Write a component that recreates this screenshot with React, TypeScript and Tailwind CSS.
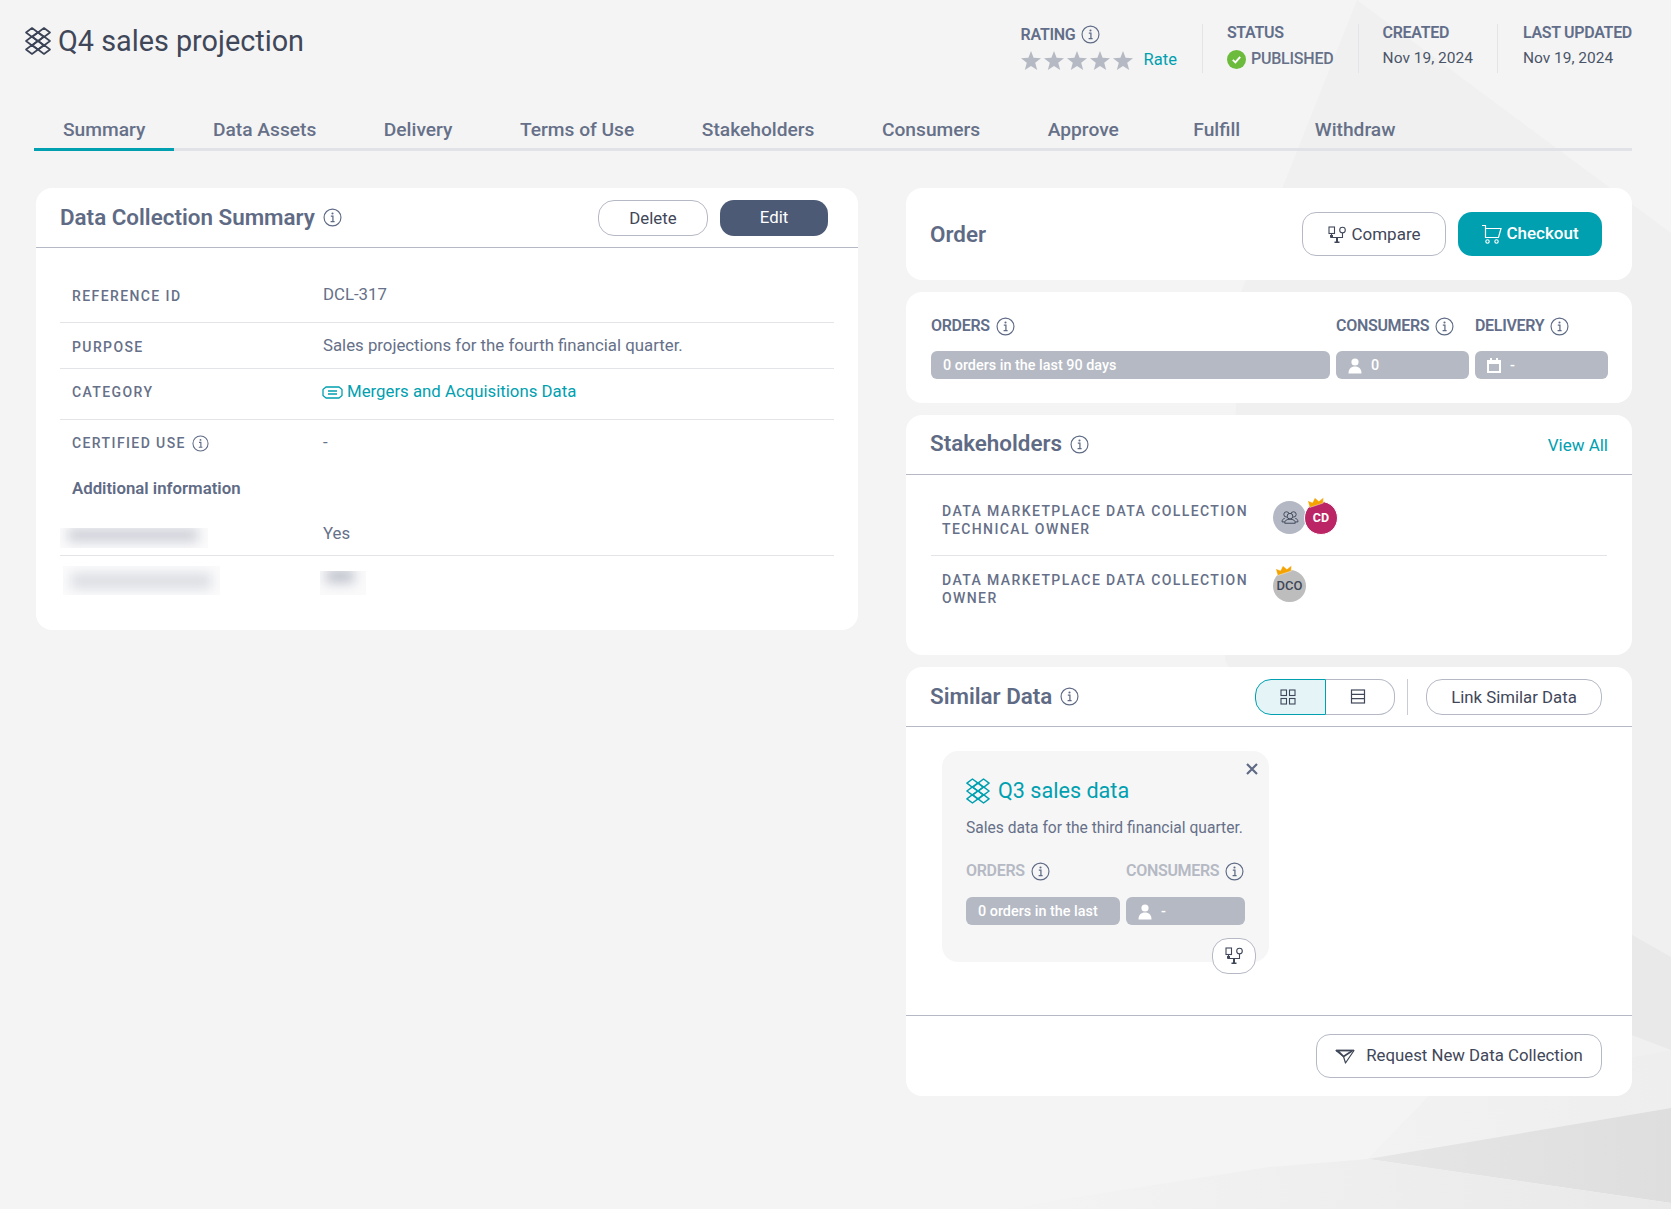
import React from "react";

function Info({ size = 18, cls = "text-[#5f6b85]" }: { size?: number; cls?: string }) {
  return (
    <svg width={size} height={size} viewBox="0 0 18 18" fill="none" className={"shrink-0 " + cls}>
      <circle cx="9" cy="9" r="8" stroke="currentColor" strokeWidth="1.1" />
      <circle cx="9" cy="5.2" r="1" fill="currentColor" />
      <path d="M7.4 7.8H9.4V12.8M7.2 13H11" stroke="currentColor" strokeWidth="1.2" />
    </svg>
  );
}

function Logo({ w, h, cls }: { w: number; h: number; cls: string }) {
  const ds: [number, number][] = [
    [7, 5.5], [19, 5.5], [7, 14], [19, 14], [7, 22.5], [19, 22.5], [13, 9.75], [13, 18.25],
  ];
  return (
    <svg width={w} height={h} viewBox="0 0 26 28" fill="none" className={"shrink-0 " + cls}>
      {ds.map(([x, y], i) => (
        <path
          key={i}
          d={`M${x} ${y - 4.5}L${x + 6} ${y}L${x} ${y + 4.5}L${x - 6} ${y}Z`}
          stroke="currentColor"
          strokeWidth="1.6"
          strokeLinejoin="round"
        />
      ))}
    </svg>
  );
}

function CompareIcon() {
  return (
    <svg width="20" height="20" viewBox="0 0 20 20" fill="none" className="shrink-0 text-[#3f4759]">
      <rect x="2" y="2" width="5.5" height="6.5" stroke="currentColor" strokeWidth="1.1" />
      <circle cx="15.5" cy="5" r="2.8" stroke="currentColor" strokeWidth="1.1" />
      <path d="M4.5 8.5V12.5H15.5V8" stroke="currentColor" strokeWidth="1.1" />
      <path d="M3 10H6V12.8H3Z M9 12.5H11V16.5H12.5V18H7.5V16.5H9Z" fill="currentColor" />
    </svg>
  );
}

function UserIcon() {
  return (
    <svg width="14" height="16" viewBox="0 0 14 16" className="shrink-0 text-white">
      <circle cx="7" cy="4" r="3.6" fill="currentColor" />
      <path d="M0.5 15.5C0.5 11 3 8.6 7 8.6S13.5 11 13.5 15.5Z" fill="currentColor" />
    </svg>
  );
}

function Crown({ cls }: { cls: string }) {
  return (
    <svg width="17" height="10" viewBox="0 0 17 10" className={"absolute " + cls}>
      <path d="M1 9.5L0 2.5L4.5 5L7.5 0.5L11 4.5L16 1.5L15 7Z" fill="#f5a300" stroke="#fff" strokeWidth="0.4" />
    </svg>
  );
}

function Pill({ children, cls }: { children: React.ReactNode; cls: string }) {
  return (
    <div className={"flex h-[28px] items-center rounded-[6px] bg-[#b5b9c3] pl-3 pt-[1px] text-[14.4px] font-medium text-white " + cls}>
      {children}
    </div>
  );
}

function MetaLabel({ children, cls = "text-[#626e89]" }: { children: React.ReactNode; cls?: string }) {
  return <span className={"text-[16px] font-semibold leading-[18px] tracking-[-0.3px] " + cls}>{children}</span>;
}

function CardHead({ title, children, h, tcls = "pb-[2px]" }: { title: string; children?: React.ReactNode; h: string; tcls?: string }) {
  return (
    <div className={"flex items-center justify-between border-b border-[#b5b9c5] pl-[24px] " + h}>
      <div className="flex items-center gap-[8px]">
        <h2 className={"text-[22.4px] font-semibold leading-[28px] text-[#5f6b85] " + tcls}>{title}</h2>
        <Info size={19} />
      </div>
      {children}
    </div>
  );
}

function DetailLabel({ children }: { children: React.ReactNode }) {
  return <span className="text-[14px] font-medium tracking-[1.4px] text-[#667088]">{children}</span>;
}

const tabs = ["Summary", "Data Assets", "Delivery", "Terms of Use", "Stakeholders", "Consumers", "Approve", "Fulfill", "Withdraw"];

export default function App() {
  return (
    <div className="relative min-h-[1209px] w-full overflow-hidden bg-[#f4f4f4] [font-family:Roboto,sans-serif]">
      <svg className="pointer-events-none absolute inset-0" width="1671" height="1209" viewBox="0 0 1671 1209" fill="none">
        <defs>
          <linearGradient id="bot" x1="1000" y1="1170" x2="1671" y2="1209" gradientUnits="userSpaceOnUse">
            <stop offset="0" stopColor="#f4f4f4" />
            <stop offset="1" stopColor="#e9e9e9" />
          </linearGradient>
          <linearGradient id="dark" x1="1368" y1="1159" x2="1671" y2="1150" gradientUnits="userSpaceOnUse">
            <stop offset="0" stopColor="#e6e6e6" />
            <stop offset="1" stopColor="#dedede" />
          </linearGradient>
          <linearGradient id="mid" x1="1300" y1="1150" x2="1671" y2="1080" gradientUnits="userSpaceOnUse">
            <stop offset="0" stopColor="#f3f3f3" />
            <stop offset="1" stopColor="#eeeeee" />
          </linearGradient>
        </defs>
        <polygon points="1357,0 1671,233 1671,1108 1368,1159 1429,1096 1225,660 1241,292" fill="#f0f0f0" />
        <polygon points="1429,1096 1671,1050 1671,1108 1368,1159" fill="url(#mid)" />
        <polygon points="1500,860 1671,957 1671,1050 1500,985" fill="#e9e9e9" />
        <polygon points="1368,1159 1671,1108 1671,1203" fill="url(#dark)" />
        <polygon points="1000,1209 1671,1209 1671,1203 1368,1159 1269,1167" fill="url(#bot)" />
      </svg>

      <div className="relative">
        {/* Top header */}
        <div className="flex items-start justify-between pl-[25px] pr-[39px] pt-[24px]">
          <div className="flex items-center gap-[7px] pt-[3px]">
            <Logo w={26} h={28} cls="text-[#3b4356]" />
            <h1 className="text-[28.8px] font-normal leading-[28px] text-[#3f4759]">Q4 sales projection</h1>
          </div>
          <div className="flex h-[49px]">
            <div className="flex flex-col pr-[25px]">
              <div className="flex items-center gap-[6px] pt-[1px]">
                <MetaLabel>RATING</MetaLabel>
                <Info size={19} />
              </div>
              <div className="mt-[6px] flex items-center gap-[11px]">
                <div className="flex gap-[3px]">
                  {[0, 1, 2, 3, 4].map((i) => (
                    <svg key={i} width="20" height="19" viewBox="0 0 20 19">
                      <path d="M10 0L12.6 6.7L20 7.2L14.2 11.8L16.2 19L10 15L3.8 19L5.8 11.8L0 7.2L7.4 6.7Z" fill="#b5b9c3" />
                    </svg>
                  ))}
                </div>
                <span className="text-[16.5px] leading-[20px] text-[#00a0b0]">Rate</span>
              </div>
            </div>
            <div className="flex flex-col border-l border-[#e3e4e8] px-[24px]">
              <MetaLabel>STATUS</MetaLabel>
              <div className="mt-[5px] flex items-center gap-[5px]">
                <svg width="19" height="19" viewBox="0 0 19 19">
                  <circle cx="9.5" cy="9.5" r="9.5" fill="#6cbb3c" />
                  <path d="M5.8 9.8L8.4 12.4L13.2 6.8" stroke="#fff" strokeWidth="1.9" fill="none" />
                </svg>
                <span className="text-[16px] font-medium tracking-[-0.2px] text-[#667088]">PUBLISHED</span>
              </div>
            </div>
            <div className="flex flex-col border-l border-[#e3e4e8] px-[24px]">
              <MetaLabel>CREATED</MetaLabel>
              <span className="mt-[4px] text-[15.5px] leading-[24px] text-[#4b5568]">Nov 19, 2024</span>
            </div>
            <div className="flex flex-col border-l border-[#e3e4e8] pl-[25px]">
              <MetaLabel>LAST UPDATED</MetaLabel>
              <span className="mt-[4px] text-[15.5px] leading-[24px] text-[#4b5568]">Nov 19, 2024</span>
            </div>
          </div>
        </div>

        {/* Tabs */}
        <div className="ml-[34px] mr-[39px] mt-[37px] flex h-[41px] gap-[9.5px] border-b-[3px] border-[#e1e2e7]">
          {tabs.map((t, i) => (
            <div
              key={t}
              className={
                "-mb-[3px] flex h-[41px] items-center border-b-[3px] px-[29px] pt-[2px] text-[19.2px] font-medium text-[#667088] " +
                (i === 0 ? "border-[#00a0b0]" : "border-transparent") +
                (t === "Fulfill" ? " ml-[7px]" : "") +
                (t === "Withdraw" ? " ml-[7px]" : "")
              }
            >
              {t}
            </div>
          ))}
        </div>

        {/* Main */}
        <div className="ml-[36px] mr-[39px] mt-[37px] flex items-start gap-[48px]">
          {/* Left card */}
          <div className="h-[442px] w-[822px] shrink-0 overflow-hidden rounded-[16px] bg-white">
            <CardHead title="Data Collection Summary" h="h-[60px] pr-[30px]">
              <div className="flex gap-[12px]">
                <button className="h-[36px] w-[110px] rounded-[16px] border border-[#b5b9c5] bg-white pt-[2px] text-[16.8px] text-[#3f4759]">Delete</button>
                <button className="h-[36px] w-[108px] rounded-[14px] bg-[#4d5a76] text-[16.8px] text-white">Edit</button>
              </div>
            </CardHead>
            <div className="px-[24px] text-[16.8px] text-[#667088]">
              <div className="flex h-[75px] items-center border-b border-[#e3e4e8] pl-[12px] pt-[20px]">
                <div className="w-[251px] pt-[1px]"><DetailLabel>REFERENCE ID</DetailLabel></div>
                <span>DCL-317</span>
              </div>
              <div className="flex h-[46px] items-center border-b border-[#e3e4e8] pl-[12px]">
                <div className="w-[251px] pt-[2px]"><DetailLabel>PURPOSE</DetailLabel></div>
                <span>Sales projections for the fourth financial quarter.</span>
              </div>
              <div className="flex h-[51px] items-center border-b border-[#e3e4e8] pb-[4px] pl-[12px]">
                <div className="w-[250px]"><DetailLabel>CATEGORY</DetailLabel></div>
                <svg width="21" height="13" viewBox="0 0 21 13" fill="none" className="mr-[4px] text-[#00a0b0]">
                  <path d="M4 1H17L20 3.5V9.5L17 12H4L1 9.5V3.5Z" stroke="currentColor" strokeWidth="1.3" strokeLinejoin="round" />
                  <path d="M6 5H15M6 8H15" stroke="currentColor" strokeWidth="1.3" />
                </svg>
                <span className="text-[#00a0b0]">Mergers and Acquisitions Data</span>
              </div>
              <div className="flex h-[46px] items-center pl-[12px]">
                <div className="flex w-[251px] items-center gap-[6px]">
                  <DetailLabel>CERTIFIED USE</DetailLabel>
                  <Info size={17} />
                </div>
                <span>-</span>
              </div>
              <div className="flex h-[46px] items-center pl-[12px]">
                <span className="font-semibold text-[#5f6b85]">Additional information</span>
              </div>
              <div className="flex h-[44px] border-b border-[#e3e4e8] pt-[16px]">
                <div className="h-[20px] w-[148px] overflow-hidden bg-[#fbfbfc]">
                  <div className="ml-[8px] mt-[0px] h-[14px] w-[130px] bg-[#cfd1d8] blur-[6px]"></div>
                </div>
                <span className="-mt-[7px] ml-[115px] h-[24px] leading-[24px]">Yes</span>
              </div>
              <div className="flex pt-[10px]">
                <div className="ml-[3px] h-[29px] w-[157px] overflow-hidden bg-[#fbfbfc]">
                  <div className="ml-[8px] mt-[7px] h-[16px] w-[140px] bg-[#dcdee3] blur-[6px]"></div>
                </div>
                <div className="ml-[100px] mt-[5px] h-[24px] w-[46px] overflow-hidden bg-[#fafafb]">
                  <div className="ml-[6px] mt-[-2px] h-[14px] w-[28px] bg-[#c0c3cd] blur-[6px]"></div>
                </div>
              </div>
            </div>
          </div>

          {/* Right column */}
          <div className="flex w-[726px] shrink-0 flex-col gap-[12px]">
            {/* Order */}
            <div className="flex h-[92px] items-center justify-between rounded-[16px] bg-white pl-[24px] pr-[30px]">
              <h2 className="pt-[2px] text-[22.4px] font-semibold text-[#5f6b85]">Order</h2>
              <div className="flex gap-[12px]">
                <button className="flex h-[44px] w-[144px] items-center justify-center gap-[4px] rounded-[14px] border border-[#b5b9c5] bg-white pt-[1px] text-[17px] text-[#3f4759]">
                  <CompareIcon />
                  Compare
                </button>
                <button className="flex h-[44px] w-[144px] items-center justify-center gap-[3px] rounded-[14px] bg-[#00a0b0] text-[17px] font-medium text-white">
                  <svg width="22" height="20" viewBox="0 0 22 20" fill="none">
                    <path d="M1 1.5H4.5V13.5H17.5L20 4.5H4.5" stroke="currentColor" strokeWidth="1.2" />
                    <circle cx="6.5" cy="17.5" r="1.7" stroke="currentColor" strokeWidth="1.1" />
                    <circle cx="15.5" cy="17.5" r="1.7" stroke="currentColor" strokeWidth="1.1" />
                  </svg>
                  Checkout
                </button>
              </div>
            </div>

            {/* Orders stats */}
            <div className="h-[111px] rounded-[16px] bg-white pl-[25px] pr-[24px] pt-[24px]">
              <div className="flex gap-[6px]">
                <div className="w-[399px]">
                  <div className="flex h-[20px] items-center gap-[6px]">
                    <MetaLabel>ORDERS</MetaLabel>
                    <Info size={19} />
                  </div>
                  <Pill cls="mt-[15px]">0 orders in the last 90 days</Pill>
                </div>
                <div className="w-[133px]">
                  <div className="flex h-[20px] items-center gap-[6px]">
                    <MetaLabel>CONSUMERS</MetaLabel>
                    <Info size={19} />
                  </div>
                  <Pill cls="mt-[15px] gap-[9px]"><UserIcon />0</Pill>
                </div>
                <div className="w-[133px]">
                  <div className="flex h-[20px] items-center gap-[6px]">
                    <MetaLabel>DELIVERY</MetaLabel>
                    <Info size={19} />
                  </div>
                  <Pill cls="mt-[15px] gap-[9px]">
                    <svg width="14" height="15" viewBox="0 0 14 15">
                      <path d="M0 2H3V0H5V2H9V0H11V2H14V15H0ZM2 6V13H12V6Z" fill="#fff" fillRule="evenodd" />
                    </svg>
                    -
                  </Pill>
                </div>
              </div>
            </div>

            {/* Stakeholders */}
            <div className="h-[240px] rounded-[16px] bg-white">
              <CardHead title="Stakeholders" h="h-[60px] pr-[24px]" tcls="pb-[4px]">
                <span className="pt-[3px] text-[17px] text-[#00a0b0]">View All</span>
              </CardHead>
              <div className="px-[25px]">
                <div className="flex h-[81px] items-start border-b border-[#e3e4e8] pl-[11px] pt-[27px]">
                  <div className="w-[331px] text-[14px] font-medium leading-[18px] tracking-[1.4px] text-[#667088]">
                    DATA MARKETPLACE DATA COLLECTION TECHNICAL OWNER
                  </div>
                  <div className="relative -mt-[1px] flex">
                    <div className="flex h-[33px] w-[33px] items-center justify-center rounded-full bg-[#b3b8c4]">
                      <svg width="18" height="15" viewBox="0 0 20 17" fill="none" stroke="#3f4759" strokeWidth="1.1">
                        <circle cx="6" cy="5" r="3" />
                        <circle cx="14" cy="5" r="3" />
                        <circle cx="10" cy="7" r="3.2" fill="#b3b8c4" />
                        <path d="M4 15C4 11.5 6.5 10.5 10 10.5S16 11.5 16 15Z" fill="#b3b8c4" />
                        <path d="M4 9.5C2 10 1 11 1 13.5H4M16 9.5C18 10 19 11 19 13.5H16" />
                      </svg>
                    </div>
                    <div className="-ml-[2px] flex h-[34px] w-[34px] items-center justify-center rounded-full border-[1px] border-white bg-[#bc2565] text-[12.5px] font-bold text-white">CD</div>
                    <Crown cls="left-[35px] -top-[4px] rotate-[-8deg]" />
                  </div>
                </div>
                <div className="flex items-start pl-[11px] pt-[15px]">
                  <div className="w-[331px] text-[14px] font-medium leading-[18px] tracking-[1.4px] text-[#667088]">
                    DATA MARKETPLACE DATA COLLECTION OWNER
                  </div>
                  <div className="relative -mt-[1px]">
                    <div className="flex h-[32px] w-[33px] items-center justify-center rounded-full bg-[#bdbdbd] text-[13px] font-medium text-[#3f4759]">DCO</div>
                    <Crown cls="left-[3px] -top-[5px] rotate-[-8deg]" />
                  </div>
                </div>
              </div>
            </div>

            {/* Similar */}
            <div className="h-[429px] rounded-[16px] bg-white">
              <CardHead title="Similar Data" h="h-[60px] pr-[30px]">
                <div className="flex items-center">
                  <div className="flex h-[36px] w-[71px] items-center justify-center rounded-l-[16px] border border-[#00a0b0] bg-[#e4f4f7] pr-[6px]">
                    <svg width="16" height="16" viewBox="0 0 16 16" fill="none" stroke="#3f4759" strokeWidth="1.1">
                      <rect x="1" y="1" width="5.5" height="5.5" />
                      <rect x="9.5" y="1" width="5.5" height="5.5" />
                      <rect x="1" y="9.5" width="5.5" height="5.5" />
                      <rect x="9.5" y="9.5" width="5.5" height="5.5" />
                    </svg>
                  </div>
                  <div className="flex h-[36px] w-[69px] items-center justify-center rounded-r-[16px] border border-l-0 border-[#b5b9c5] bg-white pr-[4px]">
                    <svg width="16" height="15" viewBox="0 0 16 15" fill="none" stroke="#3f4759" strokeWidth="1.2">
                      <rect x="1.5" y="1" width="13" height="13" />
                      <path d="M1.5 5.3H14.5M1.5 9.7H14.5" />
                    </svg>
                  </div>
                  <div className="ml-[12px] mr-[18px] h-[36px] w-px bg-[#c9ccd4]"></div>
                  <button className="h-[36px] w-[176px] rounded-[16px] border border-[#b5b9c5] bg-white pt-[2px] text-[16.8px] text-[#3f4759]">Link Similar Data</button>
                </div>
              </CardHead>
              <div className="h-[289px] border-b border-[#b5b9c5] pl-[36px] pt-[24px]">
                <div className="relative h-[211px] w-[327px] rounded-[16px] bg-[#f6f6f7] pl-[24px] pt-[27px]">
                  <svg width="14" height="14" viewBox="0 0 14 14" className="absolute right-[10px] top-[11px] text-[#5f6b85]" fill="none">
                    <path d="M2 2L12 12M12 2L2 12" stroke="currentColor" strokeWidth="2.2" />
                  </svg>
                  <div className="flex items-center gap-[8px]">
                    <Logo w={24} h={26} cls="text-[#00a0b0]" />
                    <span className="text-[21.6px] leading-[26px] text-[#00a0b0]">Q3 sales data</span>
                  </div>
                  <p className="mt-[13px] text-[15.6px] leading-[22px] text-[#667088]">Sales data for the third financial quarter.</p>
                  <div className="mt-[22px] flex">
                    <div className="w-[160px]">
                      <div className="flex h-[20px] items-center gap-[6px]">
                        <MetaLabel cls="text-[#b5b9c3]">ORDERS</MetaLabel>
                        <Info size={19} />
                      </div>
                      <Pill cls="mt-[16px] w-[154px]">0 orders in the last</Pill>
                    </div>
                    <div className="w-[119px]">
                      <div className="flex h-[20px] items-center gap-[6px]">
                        <MetaLabel cls="text-[#b5b9c3]">CONSUMERS</MetaLabel>
                        <Info size={19} />
                      </div>
                      <Pill cls="mt-[16px] gap-[9px]"><UserIcon />-</Pill>
                    </div>
                  </div>
                  <button className="absolute left-[270px] top-[187px] flex h-[36px] w-[44px] items-center justify-center rounded-[16px] border border-[#b5b9c5] bg-white">
                    <CompareIcon />
                  </button>
                </div>
              </div>
              <div className="flex justify-end pr-[30px] pt-[18px]">
                <button className="flex h-[44px] w-[286px] items-center justify-center gap-[11px] rounded-[14px] border border-[#b5b9c5] bg-white text-[16.8px] text-[#3f4759]">
                  <svg width="20" height="15" viewBox="0 0 20 15" fill="none" stroke="#3f4759" strokeWidth="1.2" strokeLinejoin="round">
                    <path d="M1 1.5H19L10.5 14L8.5 7.5Z" />
                    <path d="M3 1.8L8.5 7.5L17 2" strokeWidth="1.6" />
                    <path d="M1 1.5H19" strokeWidth="1.8" />
                  </svg>
                  Request New Data Collection
                </button>
              </div>
            </div>
          </div>
        </div>
      </div>
    </div>
  );
}
